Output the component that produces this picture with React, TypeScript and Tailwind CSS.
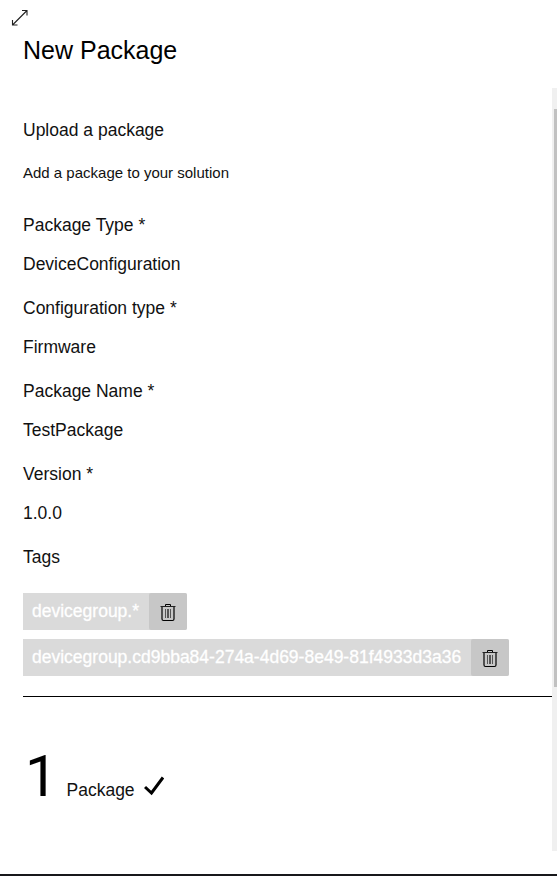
const TrashIcon = () => (
  <svg width="16" height="20" viewBox="0 0 16 20" fill="none" stroke="#000">
    <path d="M0.5 4.5H15.5" stroke="#222" />
    <path d="M5.5 4V2.5H10.5V4" />
    <path d="M2 5V17Q2 18.5 3.5 18.5H12.5Q14 18.5 14 17V5" strokeWidth="1.2" />
    <path d="M5.5 7V16M7.5 7V16M8.5 7V16M10.5 7V16" stroke="#555" />
  </svg>
);

const Tag = ({ name }: { name: string }) => (
  <div className="flex h-[37px] w-fit bg-[#dadada] text-[17.5px] leading-[37px] text-white rounded-r-[2px] [-webkit-text-stroke:0.3px_white]">
    <span className="pl-[9px] pr-[10px]">{name}</span>
    <button className="flex w-[38px] items-center justify-center rounded-[2px] bg-[#c7c7c7]" aria-label="Delete">
      <TrashIcon />
    </button>
  </div>
);

const Field = ({ label, value }: { label: string; value: string }) => (
  <div className="h-[83px]">
    <div className="h-[39px]">{label}</div>
    <div>{value}</div>
  </div>
);

export default function App() {
  return (
    <div className="flex h-[876px] w-[557px] flex-col overflow-hidden border-b-2 border-[#18181b] bg-white font-['Liberation_Sans',Arial,sans-serif] text-[17.5px] leading-5 text-[#111]">
      <header className="h-[88px] pt-[9px]">
        <svg className="ml-[11px]" width="18" height="18" viewBox="0 0 18 18" fill="none" stroke="#222" strokeWidth="1.1">
          <path d="M1.5 16L16 1.5M11 1.5H16V6.5M1.5 11V16H6.5" />
        </svg>
        <h1 className="ml-[23px] mt-[8px] text-[25px] leading-[30px] text-black">New Package</h1>
      </header>
      <div className="flex h-[763px]">
        <main className="w-[552px] pl-[23px] pt-[32px]">
          <h2>Upload a package</h2>
          <p className="mt-[23px] h-[52px] text-[15px]">Add a package to your solution</p>
          <Field label="Package Type *" value="DeviceConfiguration" />
          <Field label="Configuration type *" value="Firmware" />
          <Field label="Package Name *" value="TestPackage" />
          <Field label="Version *" value="1.0.0" />
          <div className="h-[46px]">Tags</div>
          <div className="flex flex-col gap-[9px]">
            <Tag name="devicegroup.*" />
            <Tag name="devicegroup.cd9bba84-274a-4d69-8e49-81f4933d3a36" />
          </div>
          <div className="mt-[20px] border-t border-black" />
          <div className="mt-[46px] flex items-baseline">
            <span className="w-[43.5px] pl-[2px] font-[Roboto,Arial,sans-serif] text-[58px] leading-[66px] text-black">1</span>
            <span>Package</span>
            <svg className="ml-[9.5px]" width="20" height="20" viewBox="0 0 20 20" fill="none" stroke="#000" strokeWidth="3">
              <path d="M1 11L7.5 17L19 1.5" />
            </svg>
          </div>
        </main>
        <div className="w-[5px] bg-[#f0f0f0] pl-[2px] pt-[21px]">
          <div className="h-[578px] bg-[#c1c1c1]" />
        </div>
      </div>
    </div>
  );
}
